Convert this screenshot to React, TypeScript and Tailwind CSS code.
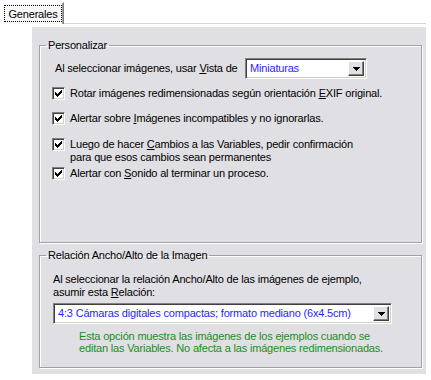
import React from "react";

const font = { fontFamily: '"Liberation Sans", Arial, sans-serif' };

function Check() {
  return (
    <span className="inline-block w-[13px] h-[13px] shrink-0 bg-white border border-t-[#808080] border-l-[#808080] border-r-white border-b-white shadow-[inset_1px_1px_0_#404040,inset_-1px_-1px_0_#d4d0c8] relative">
      <svg width="7" height="7" viewBox="0 0 7 7" shapeRendering="crispEdges" className="absolute left-[2px] top-[2px]">
        <rect x="0" y="2" width="1" height="3" fill="#000" />
        <rect x="1" y="3" width="1" height="3" fill="#000" />
        <rect x="2" y="4" width="1" height="3" fill="#000" />
        <rect x="3" y="3" width="1" height="3" fill="#000" />
        <rect x="4" y="2" width="1" height="3" fill="#000" />
        <rect x="5" y="1" width="1" height="3" fill="#000" />
        <rect x="6" y="0" width="1" height="3" fill="#000" />
      </svg>
    </span>
  );
}

function Arrow() {
  return (
    <span className="w-[16px] h-full shrink-0 bg-[#e0dfe3] border border-t-white border-l-white border-r-[#404040] border-b-[#404040] shadow-[inset_-1px_-1px_0_#808080] flex items-center justify-center">
      <svg width="7" height="4" viewBox="0 0 7 4" shapeRendering="crispEdges">
        <rect x="0" y="0" width="7" height="1" fill="#000" />
        <rect x="1" y="1" width="5" height="1" fill="#000" />
        <rect x="2" y="2" width="3" height="1" fill="#000" />
        <rect x="3" y="3" width="1" height="1" fill="#000" />
      </svg>
    </span>
  );
}

function Select({ text, w }: { text: string; w: string }) {
  return (
    <div className={`${w} h-[21px] bg-white border border-t-[#808080] border-l-[#808080] border-r-white border-b-white shadow-[inset_1px_1px_0_#404040,inset_-1px_-1px_0_#d4d0c8] flex items-stretch p-[2px] pr-[2px]`}>
      <span className="flex-1 pl-[2px] text-[#1f1fff] leading-[15px] whitespace-nowrap">{text}</span>
      <Arrow />
    </div>
  );
}

export default function App() {
  return (
    <div className="w-[431px] h-[380px] bg-white text-[11px] leading-[13px] tracking-[-0.18px] text-black overflow-hidden" style={font}>
      <div className="flex items-end h-[24px]">
        <div className="ml-[2px] w-[62px] h-[22px] bg-[#f7f7f7] border-t border-l border-white border-r border-r-[#808080] shadow-[inset_-1px_0_0_#a0a0a0] flex items-center justify-center">
          <span className="border border-dotted border-black px-[4px] leading-[14px] h-[17px] w-[58px] flex items-center justify-center">Generales</span>
        </div>
        <div className="flex-1 h-px bg-[#d6d6d6] mr-[5px]" />
      </div>
      <div className="ml-[32px] mr-[5px] mt-[3px] h-[347px] bg-[#e0dfe3] pt-[11px]">
        <fieldset className="ml-[7px] w-[383px] h-[205px] border border-[#a0a0a0] shadow-[inset_1px_1px_0_#fff,1px_1px_0_#fff] px-0 pb-0">
          <legend className="ml-[6px] px-[2px] leading-[14px]">Personalizar</legend>
          <div className="flex items-center mt-[6px] h-[21px]">
            <span className="ml-[15px] w-[190px]">
              Al seleccionar imágenes, usar <u>V</u>ista de
            </span>
            <Select text="Miniaturas" w="w-[122px]" />
          </div>
          <div className="flex mt-[8px] ml-[12px] gap-[5px]">
            <Check />
            <span>Rotar imágenes redimensionadas según orientación <u>E</u>XIF original.</span>
          </div>
          <div className="flex mt-[12px] ml-[12px] gap-[5px]">
            <Check />
            <span>Alertar sobre <u>I</u>mágenes incompatibles y no ignorarlas.</span>
          </div>
          <div className="flex mt-[13px] ml-[12px] gap-[5px]">
            <Check />
            <span>
              Luego de hacer <u>C</u>ambios a las Variables, pedir confirmación
              <br />
              para que esos cambios sean permanentes
            </span>
          </div>
          <div className="flex mt-[3px] ml-[12px] gap-[5px]">
            <Check />
            <span>Alertar con <u>S</u>onido al terminar un proceso.</span>
          </div>
        </fieldset>
        <fieldset className="ml-[7px] mt-[5px] w-[383px] h-[120px] border border-[#a0a0a0] shadow-[inset_1px_1px_0_#fff,1px_1px_0_#fff] px-0 pb-0">
          <legend className="ml-[6px] px-[2px] leading-[14px]">Relación Ancho/Alto de la Imagen</legend>
          <div className="ml-[13px] mt-[11px]">
            Al seleccionar la relación Ancho/Alto de las imágenes de ejemplo,
            <br />
            asumir esta <u>R</u>elación:
          </div>
          <div className="ml-[13px] mt-[4px]">
            <Select text="4:3 Cámaras digitales compactas; formato mediano (6x4.5cm)" w="w-[339px]" />
          </div>
          <div className="ml-[39px] mt-[6px] text-[#1a8f1a] leading-[12px]">
            Esta opción muestra las imágenes de los ejemplos cuando se
            <br />
            editan las Variables. No afecta a las imágenes redimensionadas.
          </div>
        </fieldset>
      </div>
    </div>
  );
}
